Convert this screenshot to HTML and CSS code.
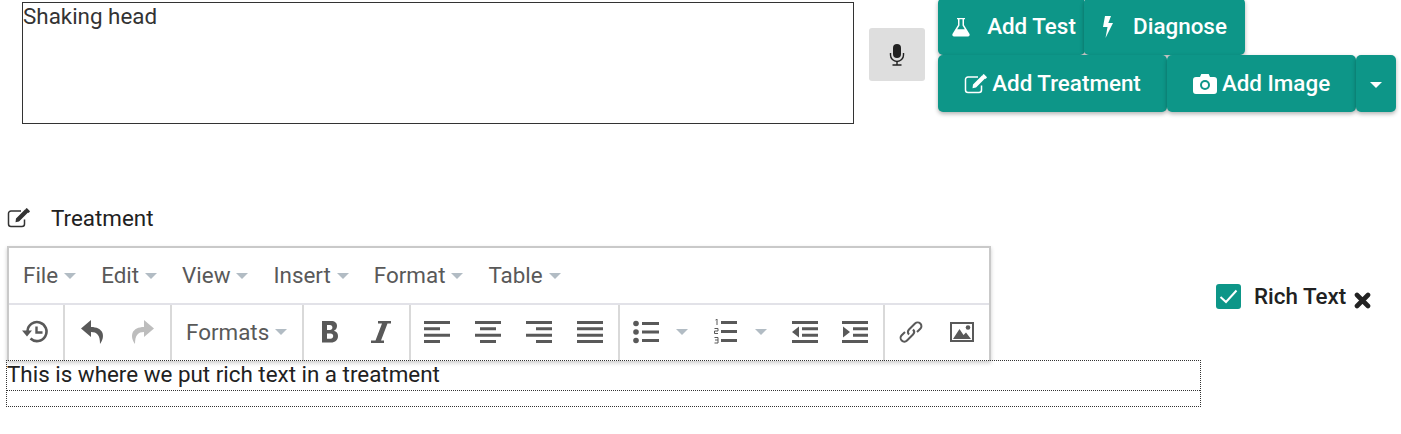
FILE: index.html
```html
<!DOCTYPE html>
<html lang="en">
<head>
<meta charset="utf-8">
<title>Treatment</title>
<link rel="stylesheet" href="styles.css">
</head>
<body>
<section class="top">
  <textarea class="notes" readonly>Shaking head</textarea>
  <button class="mic" type="button" aria-label="Microphone">
    <svg width="16" height="22" viewBox="0 0 16 22"><rect x="4" y="0" width="8" height="14" rx="4" fill="#222"/><path d="M1.5 9v2a6.5 6.5 0 0 0 13 0V9" fill="none" stroke="#222" stroke-width="1.4"/><path d="M8 17.500v3M3.500 21h9" fill="none" stroke="#222" stroke-width="1.400"/></svg>
  </button>
  <div class="actions">
    <div class="action-row">
      <button class="act act-test" type="button">
        <svg class="ic-flask" width="20" height="20" viewBox="0 0 20 20"><path d="M6 1h8v1.300h-1V8l5.400 8.800c.8 1.300 0 2.700-1.500 2.700H3.100c-1.500 0-2.300-1.400-1.500-2.700L7 8V2.300H6z" fill="#fff"/><path d="M8.500 2.300v6.100L6.200 12.200h7.600L11.500 8.400V2.300z" fill="#0d9688"/></svg>
        Add Test
      </button>
      <button class="act act-diag" type="button">
        <svg class="ic-bolt" width="12" height="22" viewBox="0 0 12 22"><path d="M3 0h6L6.300 7H11L3.500 22 5.500 11H1z" fill="#fff"/></svg>
        Diagnose
      </button>
    </div>
    <div class="action-row">
      <button class="act act-treat" type="button">
        <svg width="24" height="20" viewBox="0 0 24 20"><path d="M17.500 11.500V16a2.500 2.500 0 0 1-2.500 2.500H4A2.500 2.500 0 0 1 1.500 16V5.500A2.500 2.500 0 0 1 4 3h10" fill="none" stroke="#fff" stroke-width="1.500"/><path d="M9 10.500 18 1.500l3 3-9 9-3.500.8zM19 .5l.8-.5 3.200 3.200-.5.8-1 1-3.300-3.300z" fill="#fff"/></svg>
        Add Treatment
      </button>
      <button class="act act-img" type="button">
        <svg width="24" height="20" viewBox="0 0 24 20"><path d="M3 3h4l1.300-3h7.400L17 3h4a3 3 0 0 1 3 3v11a3 3 0 0 1-3 3H3a3 3 0 0 1-3-3V6a3 3 0 0 1 3-3z" fill="#fff"/><circle cx="12" cy="11" r="5" fill="#0d9688"/><circle cx="12" cy="11" r="3" fill="#fff"/></svg>
        Add Image
      </button>
      <button class="act act-more" type="button" aria-label="More"><span class="caret-white"></span></button>
    </div>
  </div>
</section>

<section class="lower">
  <div class="left">
    <h2 class="heading">
      <svg width="24" height="20" viewBox="0 0 24 20"><path d="M17.500 11.500V16a2.500 2.500 0 0 1-2.500 2.500H4A2.500 2.500 0 0 1 1.500 16V5.500A2.500 2.500 0 0 1 4 3h10" fill="none" stroke="#333" stroke-width="1.500"/><path d="M9 10.500 18 1.500l3 3-9 9-3.500.8zM19 .5l.8-.5 3.200 3.200-.5.8-1 1-3.300-3.300z" fill="#333"/></svg>
      <span>Treatment</span>
    </h2>
    <div class="editor">
      <div class="menubar">
        <span class="menu">File<i class="caret"></i></span>
        <span class="menu">Edit<i class="caret"></i></span>
        <span class="menu">View<i class="caret"></i></span>
        <span class="menu">Insert<i class="caret"></i></span>
        <span class="menu">Format<i class="caret"></i></span>
        <span class="menu">Table<i class="caret"></i></span>
      </div>
      <div class="toolbar">
        <div class="group g1">
          <span class="tool"><svg width="28" height="24" viewBox="0 0 28 24"><path d="M5.500 11a9.500 9.500 0 1 1 3 7.500" fill="none" stroke="#595959" stroke-width="2.600"/><path d="M0 10.500h10l-5 6z" fill="#595959"/><path d="M14.500 6.500v6h6" fill="none" stroke="#595959" stroke-width="2.400"/></svg></span>
        </div>
        <div class="group g2">
          <span class="tool"><svg width="24" height="25" viewBox="0 0 24 25"><path d="M11 1 1 9.500 11 18v-5c6 0 9 3 9 12 3-4 3.500-8 2.500-11-1.500-4-6-6-11.500-6z" fill="#595959"/></svg></span>
          <span class="tool"><svg width="24" height="25" viewBox="0 0 24 25"><path d="M13 1l10 8.500L13 18v-5c-6 0-9 3-9 12-3-4-3.500-8-2.500-11C3 10 7.500 8 13 8z" fill="#bdbdbd"/></svg></span>
        </div>
        <div class="group g3">
          <span class="menu formats">Formats<i class="caret"></i></span>
        </div>
        <div class="group g4">
          <span class="tool"><svg width="18" height="22" viewBox="0 0 18 22"><path fill-rule="evenodd" d="M1 0h9c4 0 6 2 6 5 0 2.300-1.200 4-3.200 4.800 2.600.6 4.200 2.500 4.200 5.200 0 4-2.800 6.500-7 6.500H1zm5 4v5h3c1.500 0 2.400-1 2.400-2.500S10.500 4 9 4zm0 8.500v5.200h3.500c1.700 0 2.700-1 2.700-2.600s-1-2.600-2.700-2.600z" fill="#595959"/></svg></span>
          <span class="tool"><svg width="20" height="22" viewBox="0 0 20 22"><path d="M7 0h13v2.500h-3.500L10 19.500h3V22H0v-2.500h4.500L11 2.500H7z" fill="#595959"/></svg></span>
        </div>
        <div class="group g5">
          <span class="tool"><svg width="26" height="22" viewBox="0 0 26 22" fill="#595959"><path d="M0 0h26v3H0zM0 6.300h16v3H0zM0 12.700h26v3H0zM0 19h16v3H0z"/></svg></span>
          <span class="tool"><svg width="26" height="22" viewBox="0 0 26 22" fill="#595959"><path d="M0 0h26v3H0zM5 6.300h16v3H5zM0 12.700h26v3H0zM5 19h16v3H5z"/></svg></span>
          <span class="tool"><svg width="26" height="22" viewBox="0 0 26 22" fill="#595959"><path d="M0 0h26v3H0zM10 6.300h16v3H10zM0 12.700h26v3H0zM10 19h16v3H10z"/></svg></span>
          <span class="tool"><svg width="26" height="22" viewBox="0 0 26 22" fill="#595959"><path d="M0 0h26v3H0zM0 6.300h26v3H0zM0 12.700h26v3H0zM0 19h26v3H0z"/></svg></span>
        </div>
        <div class="group g6">
          <span class="split">
            <span class="split-icon"><svg width="26" height="24" viewBox="0 0 26 24" fill="#595959"><circle cx="3" cy="3.500" r="2.800"/><circle cx="3" cy="12" r="2.800"/><circle cx="3" cy="20.500" r="2.800"/><path d="M9 2h17v3H9zM9 10.500h17v3H9zM9 19h17v3H9z"/></svg></span>
            <i class="caret split-caret"></i>
          </span>
          <span class="split">
            <span class="split-icon"><svg width="23" height="25" viewBox="0 0 23 25" fill="#595959"><path d="M7 2h16v3H7zM7 11h16v3H7zM7 20h16v3H7z"/><path d="M1.500 1 3 0v6M.500 9.500H4V12H.500v2.500H4M.500 18.500H4V21H1M4 21v3H.500" fill="none" stroke="#595959" stroke-width="1"/></svg></span>
            <i class="caret split-caret"></i>
          </span>
          <span class="tool"><svg width="27" height="22" viewBox="0 0 27 22" fill="#595959"><path d="M1 0h26v3H1zM11 6.300h16v3H11zM11 12.700h16v3H11zM1 19h26v3H1zM8 5.500v11L1 11z"/></svg></span>
          <span class="tool"><svg width="27" height="22" viewBox="0 0 27 22" fill="#595959"><path d="M0 0h26v3H0zM11 6.300h15v3H11zM11 12.700h15v3H11zM0 19h26v3H0zM1 5.500v11L8 11z"/></svg></span>
        </div>
        <div class="group g7">
          <span class="tool"><svg width="26" height="26" viewBox="0 0 26 26" fill="none" stroke="#595959" stroke-width="2"><path d="M11 15.500c-1.500-1.500-1.500-3.500 0-5l6-6c1.500-1.500 3.800-1.500 5.300 0s1.500 3.800 0 5.300L19 13"/><path d="M15 10.500c1.500 1.500 1.500 3.500 0 5l-6 6c-1.500 1.500-3.800 1.500-5.300 0s-1.500-3.800 0-5.300L7 13"/></svg></span>
          <span class="tool"><svg width="24" height="20" viewBox="0 0 24 20"><rect x="1" y="1" width="22" height="18" fill="none" stroke="#595959" stroke-width="2"/><path d="M3 17 9.500 7l4 6 2.500-2.500L21 17z" fill="#595959"/><circle cx="18" cy="5.500" r="2.300" fill="#595959"/></svg></span>
        </div>
      </div>
    </div>
    <div class="rich">
      <p class="rich-line">This is where we put rich text in a treatment</p>
      <p class="rich-empty"></p>
    </div>
  </div>
  <aside class="toggle">
    <span class="check"><svg width="25" height="25" viewBox="0 0 25 25"><path d="M4.500 13l5.500 5 10.500-11.500" fill="none" stroke="#fff" stroke-width="2"/></svg></span>
    <span class="toggle-label">Rich Text</span>
    <svg class="close" width="17" height="17" viewBox="0 0 17 17"><path d="M3 3l11 11M14 3 3 14" stroke="#222" stroke-width="4.600" stroke-linecap="round" fill="none"/></svg>
  </aside>
</section>
</body>
</html>
```
FILE: styles.css
```css
* { box-sizing: border-box; }
html, body { margin: 0; padding: 0; }
body {
  width: 1401px;
  height: 434px;
  overflow: hidden;
  background: #fff;
  color: #212121;
  font-family: Roboto, "Liberation Sans", sans-serif;
}
.top { display: flex; align-items: flex-start; padding-left: 22px; height: 112px; }
.notes {
  display: block;
  width: 832px;
  height: 122px;
  margin-top: 2px;
  padding: 0;
  border: 1px solid #333;
  border-radius: 0;
  outline: none;
  resize: none;
  overflow: hidden;
  font: 400 22.400px/27px Roboto, sans-serif;
  color: #333;
}
.mic {
  width: 56px;
  height: 53px;
  margin: 28px 13px 0 15px;
  padding: 0;
  border: 0;
  border-radius: 3px;
  background: #dedede;
  display: flex;
  align-items: center;
  justify-content: center;
}
.actions { display: flex; flex-direction: column; margin-top: -2px; }
.action-row { display: flex; }
.act {
  height: 57px;
  padding: 0;
  border: 0;
  border-radius: 5px;
  background: #0d9688;
  color: #fff;
  font: 500 22.400px/1 Roboto, sans-serif;
  display: flex;
  align-items: center;
  justify-content: center;
  box-shadow: 0 2px 4px rgba(0,0,0,.3);
  position: relative;
}
.act-test { width: 147px; gap: 16px; padding-left: 4px; }
.act-diag { width: 161px; margin-left: -1px; gap: 19px; }
.act-treat { width: 229px; gap: 4px; }
.act-img { width: 189px; gap: 5px; }
.act-more { width: 40px; }
.caret-white {
  width: 0; height: 0;
  border-left: 6px solid transparent;
  border-right: 6px solid transparent;
  border-top: 6px solid #fff;
  margin-top: 2px;
}
.lower { display: flex; align-items: flex-start; margin-top: 94px; }
.left { width: 1195px; margin-left: 6px; flex: none; }
.heading {
  margin: 0 0 16px 1px;
  height: 24px;
  display: flex;
  align-items: center;
  gap: 20px;
  font: 400 22.400px/24px Roboto, sans-serif;
  color: #212121;
}
.editor {
  position: relative;
  width: 984px;
  margin-left: 1px;
  border: 2px solid #c9c9c9;
  border-bottom: 0;
  background: #fff;
  box-shadow: 0 2px 4px rgba(0,0,0,.2);
}
.menubar {
  height: 57px;
  border-bottom: 2px solid #e2e2e8;
  display: flex;
  align-items: center;
  padding-left: 14px;
  gap: 25px;
}
.menu {
  display: inline-flex;
  align-items: center;
  gap: 6px;
  font: 400 22.400px/1 Roboto, sans-serif;
  color: #595959;
}
.caret {
  display: inline-block;
  width: 0; height: 0;
  border-left: 6.500px solid transparent;
  border-right: 6.500px solid transparent;
  border-top: 6px solid #b2bcc4;
}
.toolbar { display: flex; height: 56px; }
.group {
  flex: none;
  display: flex;
  align-items: center;
  border-right: 2px solid #d9d9d9;
}
.g1 { width: 56px; padding-left: 1px; }
.g2 { width: 107px; padding-left: 1px; }
.g3 { width: 132px; padding-left: 14px; padding-bottom: 2px; }
.g4 { width: 107px; }
.g5 { width: 209px; }
.g6 { width: 265px; padding-left: 1px; }
.g7 { width: 106px; border-right: 0; }
.tool, .split { margin-bottom: 3px; }
.tool { flex: none; width: 51px; display: flex; align-items: center; justify-content: center; }
.split { flex: none; width: 79px; display: flex; align-items: center; }
.split-icon { width: 50px; display: flex; justify-content: center; }
.split-caret { margin-left: 5px; }
.rich {
  position: relative;
  margin-top: -1px;
  border: 1px dotted #333;
  height: 47px;
}
.rich p { margin: 0; }
.rich-line {
  height: 30px;
  border-bottom: 1px dotted #333;
  font: 400 22.400px/27px Roboto, sans-serif;
  color: #212121;
}
.toggle {
  margin: 78px 0 0 15px;
  display: flex;
  align-items: flex-start;
}
.check {
  width: 25px;
  height: 25px;
  border-radius: 3px;
  background: #0d9688;
  display: block;
}
.check svg { display: block; }
.toggle-label {
  margin: -1px 0 0 13px;
  font: 500 22.400px/26px Roboto, sans-serif;
  color: #212121;
}
.close { margin: 8px 0 0 8px; }
```
